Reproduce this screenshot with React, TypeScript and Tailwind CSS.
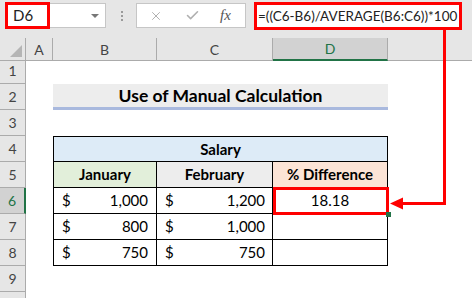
import { Check, X } from "lucide-react";

const cols = "grid grid-cols-[26px_27px_104px_116px_115px_1fr]";
const font = "font-['Lato','Liberation_Sans',sans-serif]";

function RowHead({ n, active }: { n?: number; active?: boolean }) {
    return (
        <div
            className={
                active
                    ? "flex items-center justify-center border-b border-r-2 border-b-[#ababab] border-r-[#217346] bg-[#d2d2d2] text-[14px] text-[#217346]"
                    : "flex items-center justify-center border-b border-r border-[#ababab] bg-[#e6e6e6] text-[14px] text-[#444]"
            }
        >
            {n}
        </div>
    );
}

function Money({ value, first }: { value: string; first?: boolean }) {
    return (
        <div
            className={
                first
                    ? "flex items-center justify-between border-b border-l border-r border-black pl-[8px] pr-[8px] text-[15px]"
                    : "flex items-center justify-between border-b border-r border-black pl-[8px] pr-[7px] text-[15px]"
            }
        >
            <span>$</span>
            <span>{value}</span>
        </div>
    );
}

export default function App() {
    const data = [
        { row: 6, jan: "1,000", feb: "1,200", diff: "18.18" },
        { row: 7, jan: "800", feb: "1,000", diff: "" },
        { row: 8, jan: "750", feb: "750", diff: "" },
    ];

    return (
        <div className={`relative h-[298px] w-[472px] overflow-hidden bg-white text-black ${font}`}>
            {/* formula bar */}
            <div className="flex h-[38px] items-start bg-[#e6e6e6] pt-[3px]">
                <div className="ml-[5px] flex h-[25px] w-[101px] items-center border border-[#c6c6c6] bg-white">
                    <div className="-ml-px -mt-px flex h-[27px] w-[45px] items-center border-[3px] border-[#ff0000] pl-[5px] text-[15px] text-[#222]">
                        D6
                    </div>
                    <span className="ml-auto mr-[6px] h-0 w-0 border-x-[4px] border-t-[4px] border-x-transparent border-t-[#777]" />
                </div>
                <div className="ml-[15px] mt-[8px] flex flex-col gap-[2px]">
                    <span className="h-[2px] w-[2px] bg-[#9a9a9a]" />
                    <span className="h-[2px] w-[2px] bg-[#9a9a9a]" />
                    <span className="h-[2px] w-[2px] bg-[#9a9a9a]" />
                </div>
                <div className="ml-[13px] flex h-[25px] w-[110px] items-center border border-[#c6c6c6] bg-white">
                    <X className="ml-[12px] h-[14px] w-[14px] text-[#a6a6a6]" strokeWidth={1.5} />
                    <Check className="ml-[22px] h-[15px] w-[15px] text-[#b0b0b0]" strokeWidth={2.5} />
                    <span className="ml-[20px] font-['Liberation_Serif',serif] text-[15px] italic text-[#555]">
                        fx
                    </span>
                </div>
                <div className="-mt-px ml-[8px] flex h-[28px] w-[208px] items-center overflow-hidden whitespace-nowrap border-[3px] border-[#ff0000] bg-white pl-[1px] text-[13.5px] text-[#222]">
                    =((C6-B6)/AVERAGE(B6:C6))*100
                </div>
            </div>

            {/* column headers */}
            <div className={`${cols} h-[20px] text-[14px] text-[#444]`}>
                <div className="relative border-b border-r border-[#ababab] bg-[#e6e6e6]">
                    <svg className="absolute bottom-[3px] right-[3px]" width="12" height="12">
                        <polygon points="12,0 12,12 0,12" fill="#b5b5b5" />
                    </svg>
                </div>
                <div className="flex items-center justify-center border-b border-r border-[#ababab] bg-[#e6e6e6]">A</div>
                <div className="flex items-center justify-center border-b border-r border-[#ababab] bg-[#e6e6e6]">B</div>
                <div className="flex items-center justify-center border-b border-r border-[#ababab] bg-[#e6e6e6]">C</div>
                <div className="flex items-center justify-center border-b-2 border-r border-b-[#217346] border-r-[#ababab] bg-[#d2d2d2] text-[#217346]">
                    D
                </div>
                <div className="border-b border-[#ababab] bg-[#e6e6e6]" />
            </div>

            {/* sheet */}
            <div className={`${cols} auto-rows-[26px]`}>
                <RowHead n={1} />
                <div className="col-span-5" />

                <RowHead n={2} />
                <div />
                <div className="col-span-3 flex items-center justify-center border-b-[3px] border-[#a9b9de] bg-[#ededed] pt-[2px] text-[17.5px] font-bold">
                    Use of Manual Calculation
                </div>
                <div />

                <RowHead n={3} />
                <div className="col-span-5" />

                <RowHead n={4} />
                <div />
                <div className="col-span-3 flex items-center justify-center border border-black bg-[#ddebf7] text-[15px] font-bold">
                    Salary
                </div>
                <div />

                <RowHead n={5} />
                <div />
                <div className="flex items-center justify-center border-b border-l border-r border-black bg-[#e2efda] text-[15px] font-bold">
                    January
                </div>
                <div className="flex items-center justify-center border-b border-r border-black bg-[#ededed] text-[15px] font-bold">
                    February
                </div>
                <div className="flex items-center justify-center border-b border-r border-black bg-[#fce4d6] text-[15px] font-bold">
                    % Difference
                </div>
                <div />

                {data.map((d) => (
                    <div key={d.row} className="contents">
                        <RowHead n={d.row} active={d.row === 6} />
                        <div />
                        <Money value={d.jan} first />
                        <Money value={d.feb} />
                        <div className="flex items-center justify-center border-b border-r border-black text-[15px]">
                            {d.diff}
                        </div>
                        <div />
                    </div>
                ))}

                <RowHead n={9} />
                <div className="col-span-5" />
                <RowHead />
                <div className="col-span-5" />
            </div>

            {/* selected cell highlight */}
            <div className="absolute left-[273px] top-[187px] h-[28px] w-[116px] border-[3px] border-[#ff0000]" />
            <div className="absolute left-[386px] top-[212px] h-[5px] w-[5px] bg-[#217346]" />

            {/* arrow */}
            <svg className="absolute left-0 top-0" width="472" height="298">
                <polyline points="444.5,30 444.5,203.5 400,203.5" fill="none" stroke="#ff0000" strokeWidth="3" />
                <polygon points="390,203.5 403,197.5 403,209.5" fill="#ff0000" />
            </svg>
        </div>
    );
}
